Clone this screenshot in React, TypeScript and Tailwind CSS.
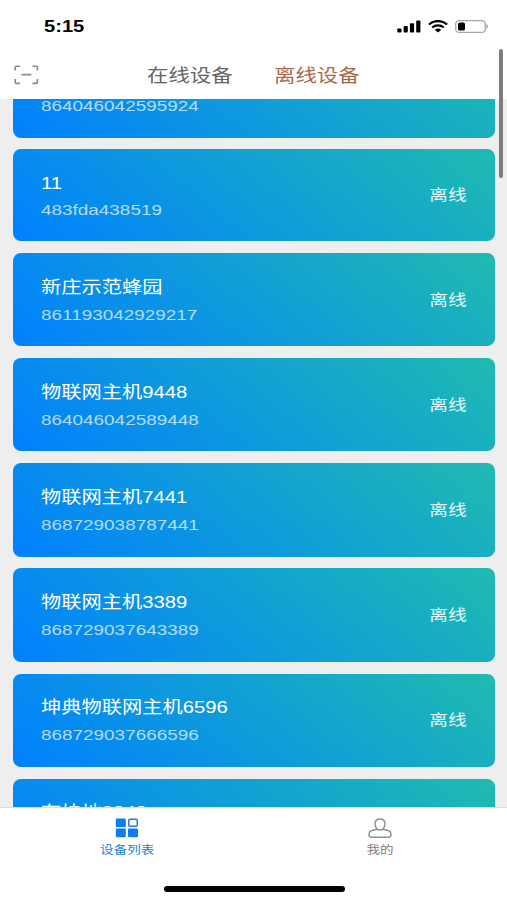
const devices = [
  { name: "物联网主机5924", id: "864046042595924" },
  { name: "11", id: "483fda438519", compact: true },
  { name: "新庄示范蜂园", id: "861193042929217" },
  { name: "物联网主机9448", id: "864046042589448" },
  { name: "物联网主机7441", id: "868729038787441" },
  { name: "物联网主机3389", id: "868729037643389" },
  { name: "坤典物联网主机6596", id: "868729037666596" },
  { name: "有块地2848", id: "868729037662848" },
];

function StatusBar() {
  return (
    <div className="flex h-[52px] items-center justify-between pl-[43.5px] pr-[18px]">
      <span className="origin-left scale-x-[1.22] text-[16.5px] font-bold leading-none text-black">5:15</span>
      <div className="flex items-center">
        <svg width="24" height="13" viewBox="0 0 24 13" fill="#000">
          <rect x="0.3" y="8.4" width="4.2" height="4.2" rx="1" />
          <rect x="6.6" y="6.1" width="4.2" height="6.5" rx="1" />
          <rect x="12.9" y="3.2" width="4.2" height="9.4" rx="1" />
          <rect x="19.2" y="0.5" width="4.2" height="12.1" rx="1" />
        </svg>
        <svg className="ml-[7px]" width="20" height="13" viewBox="0 0 20 13" fill="none" stroke="#000">
          <path d="M0.9 4.5C6 -0.1 14 -0.1 19.1 4.5" strokeWidth="2.3" />
          <path d="M4.2 7.5C7.5 4.7 12.5 4.7 15.8 7.5" strokeWidth="2.2" />
          <path d="M6.8 9.7C8.6 8.2 11.4 8.2 13.2 9.7L10 12.5Z" fill="#000" stroke="none" />
        </svg>
        <svg className="ml-[7px]" width="34" height="13" viewBox="0 0 34 13">
          <rect x="0.7" y="0.7" width="29.6" height="11.6" rx="3.2" fill="none" stroke="#a6a6a6" strokeWidth="1.3" />
          <rect x="3" y="2.4" width="7" height="8.2" rx="1.6" fill="#000" />
          <path d="M31.3 4.3C33.6 5 33.6 8 31.3 8.7Z" fill="#a6a6a6" />
        </svg>
      </div>
    </div>
  );
}

function Header() {
  return (
    <div className="grid h-[47px] grid-cols-[147px_127px_1fr] items-center text-[17.7px] leading-none">
      <svg className="mb-[2px] ml-[14px]" width="25" height="20" viewBox="0 0 25 20" fill="none" stroke="#8a8a8a" strokeWidth="1.6">
        <path d="M1.2 5.5V2.2Q1.2 1.2 2.2 1.2H6M18.5 1.2H22.4Q23.4 1.2 23.4 2.2V5.5M23.4 14V17.4Q23.4 18.4 22.4 18.4H18.5M6 18.4H2.2Q1.2 18.4 1.2 17.4V14M7.5 9.6H17.3" />
      </svg>
      <span className="mt-[2px] origin-left scale-x-[1.21] text-[#666]">在线设备</span>
      <span className="mt-[2px] origin-left scale-x-[1.21] text-[#a8694a]">离线设备</span>
    </div>
  );
}

function DeviceCard({ name, id, compact }: { name: string; id: string; compact?: boolean }) {
  return (
    <div
      className={`flex shrink-0 items-center justify-between rounded-[8px] bg-[linear-gradient(39.4deg,#0080ff,#1fbbb0)] pl-[27.5px] pr-[28px] text-white ${
        compact ? "h-[91.9px]" : "h-[93.5px]"
      }`}
    >
      <div className="pt-[2px]">
        <div className={`origin-left scale-x-[1.22] text-[16.6px] ${compact ? "leading-[27px]" : "leading-[28px]"}`}>{name}</div>
        <div className="origin-left scale-x-[1.22] text-[15.5px] leading-[26px] text-white/70">{id}</div>
      </div>
      <span className="origin-right scale-x-[1.22] pt-px text-[15.3px] text-white/90">离线</span>
    </div>
  );
}

export default function App() {
  return (
    <div className="relative flex h-[900px] w-full flex-col overflow-hidden bg-white font-['Liberation_Sans','Noto_Sans_CJK_SC',sans-serif]">
      <StatusBar />
      <Header />

      <div className="h-[708px] overflow-hidden bg-[#eeeeee]">
        <div className="-mt-[55px] flex flex-col gap-[11.7px] pl-[13px] pr-[12.5px]">
          {devices.map((device) => (
            <DeviceCard key={device.id} {...device} />
          ))}
        </div>
      </div>

      <div className="grid flex-1 grid-cols-2 border-t border-[#dcdcdc] bg-white text-[11.1px] leading-none">
        <div className="flex flex-col items-center pt-[10px] text-[#1a80e0]">
          <svg width="24" height="20" viewBox="0 0 24 20" fill="#0b7df0">
            <rect x="0.8" y="0.5" width="10" height="8.6" rx="1.2" />
            <rect x="0.8" y="10.6" width="10" height="8.6" rx="1.2" />
            <rect x="13" y="10.6" width="10" height="8.6" rx="1.2" />
            <rect x="13.8" y="1.2" width="8.5" height="7.1" rx="1.2" fill="none" stroke="#2a77cf" strokeWidth="1.5" />
          </svg>
          <span className="mt-[7px] scale-x-[1.22]">设备列表</span>
        </div>
        <div className="flex flex-col items-center pt-[10px] text-[#808080]">
          <svg width="24" height="21" viewBox="0 0 24 21" fill="none" stroke="#919191" strokeWidth="1.5">
            <path d="M9.2 11.2C7.6 9.8 7.1 7.8 7.1 5.8C7.1 2.8 8.8 1.1 12 1.1S16.9 2.8 16.9 5.8C16.9 7.8 16.4 9.8 14.8 11.2" />
            <path d="M8.8 11.3C10.8 12.2 13.2 12.2 15.2 11.3C19.6 12 22.9 13.2 22.9 15.6V17.3C22.9 18.7 22.2 19.2 20.8 19.2H3.2C1.8 19.2 1.1 18.7 1.1 17.3V15.6C1.1 13.2 4.4 12 8.8 11.3Z" />
          </svg>
          <span className="mt-[6px] scale-x-[1.22]">我的</span>
        </div>
      </div>

      {/* scroll indicator */}
      <div className="absolute right-[4px] top-[49px] h-[129px] w-[4px] rounded-full bg-[#7d7d7d]" />
      {/* home indicator */}
      <div className="absolute bottom-[8.5px] left-[163.5px] h-[6px] w-[181px] rounded-full bg-black" />
    </div>
  );
}
